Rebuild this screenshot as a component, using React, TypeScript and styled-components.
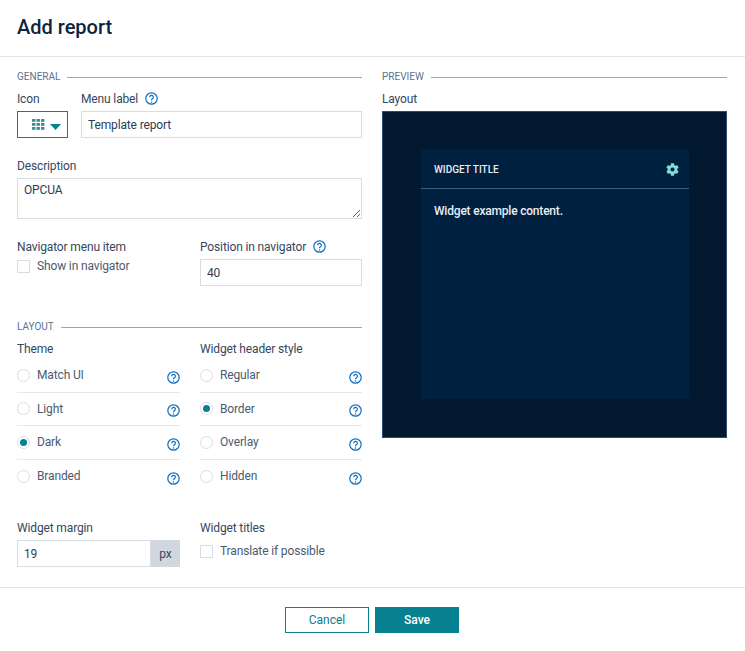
import React from 'react';
import styled, { createGlobalStyle } from 'styled-components';
import { FaCog } from 'react-icons/fa';

const GlobalStyle = createGlobalStyle`
  html, body {
    margin: 0;
    padding: 0;
    background: #fff;
    font-family: Roboto, "Liberation Sans", sans-serif;
    color: #2c3e55;
  }
  * {
    box-sizing: border-box;
  }
`;

const Modal = styled.div`
  width: 745px;
  height: 651px;
  display: flex;
  flex-direction: column;
  background: #fff;
`;

const Header = styled.header`
  height: 57px;
  padding: 15px 17px 0;
  border-bottom: 1px solid #e1e5ea;
`;

const Title = styled.h1`
  margin: 0;
  font-size: 20px;
  line-height: 24px;
  font-weight: 500;
  color: #0e2440;
`;

const Body = styled.div`
  flex: 1;
  display: grid;
  grid-template-columns: 345px 345px;
  column-gap: 20px;
  padding: 14px 18px 0 17px;
`;

const Column = styled.div`
  display: flex;
  flex-direction: column;
`;

const Legend = styled.div<{ $top?: number }>`
  display: flex;
  align-items: center;
  gap: 7px;
  height: 12px;
  margin-top: ${p => p.$top ?? 0}px;
  font-size: 10px;
  line-height: 12px;
  text-transform: uppercase;
  color: #5b7290;

  &::after {
    content: '';
    flex: 1;
    height: 1px;
    margin-top: 1px;
    background: #93a9c0;
  }
`;

const Label = styled.label`
  display: flex;
  align-items: center;
  gap: 7px;
  height: 16px;
  margin-bottom: 4px;
  font-size: 12px;
  line-height: 16px;
  letter-spacing: -0.14px;
  color: #36475e;
`;

const TopRow = styled.div`
  display: flex;
  gap: 13px;
  margin-top: 8px;
`;

const Grow = styled.div`
  flex: 1;
  min-width: 0;
`;

const IconPicker = styled.button`
  display: flex;
  align-items: center;
  width: 51px;
  height: 27px;
  padding: 0;
  background: #fff;
  border: 1px solid #07808f;
`;

const TextInput = styled.input`
  display: block;
  width: 100%;
  min-width: 0;
  height: 27px;
  padding: 0 6px;
  border: 1px solid #d8dde4;
  border-radius: 0;
  outline: none;
  background: #fff;
  font-family: inherit;
  font-size: 12px;
  letter-spacing: -0.14px;
  color: #2c3e55;
`;

const TextArea = styled.textarea`
  display: block;
  width: 100%;
  height: 41px;
  padding: 4px 6px;
  border: 1px solid #d8dde4;
  border-radius: 0;
  outline: none;
  background: #fff;
  font-family: inherit;
  font-size: 12px;
  line-height: 14px;
  letter-spacing: -0.14px;
  color: #2c3e55;
`;

const Field = styled.div<{ $top?: number }>`
  margin-top: ${p => p.$top ?? 0}px;
`;

const TwoCols = styled.div<{ $top?: number }>`
  display: grid;
  grid-template-columns: 163px 162px;
  column-gap: 20px;
  margin-top: ${p => p.$top ?? 0}px;
`;

const CheckRow = styled.div<{ $top: number }>`
  display: flex;
  align-items: center;
  gap: 7px;
  height: 14px;
  margin-top: ${p => p.$top}px;
  font-size: 12px;
  line-height: 14px;
  letter-spacing: -0.14px;
  color: #4a5b72;
`;

const CheckBox = styled.span`
  width: 13px;
  height: 13px;
  border: 1px solid #d8dde4;
  background: #fff;
`;

const RadioList = styled.div`
  margin-top: -2px;
`;

const RadioRow = styled.div`
  display: flex;
  align-items: center;
  height: 33.5px;
  border-bottom: 1px solid #e4e8ed;
  font-size: 12px;
  letter-spacing: -0.14px;
  color: #4a5b72;

  &:last-child {
    border-bottom: none;
  }
`;

const Radio = styled.span<{ $on?: boolean }>`
  display: flex;
  align-items: center;
  justify-content: center;
  width: 13px;
  height: 13px;
  margin-right: 7px;
  border: 1px solid #d8dde4;
  border-radius: 50%;
  background: #fff;

  &::after {
    content: '';
    display: ${p => (p.$on ? 'block' : 'none')};
    width: 7px;
    height: 7px;
    border-radius: 50%;
    background: #07808f;
  }
`;

const RadioText = styled.span`
  flex: 1;
`;

const Help = styled.svg`
  display: block;
  width: 13px;
  height: 13px;
  flex: none;
  margin-top: -2px;
`;

const HelpLow = styled(Help)`
  margin-top: 4px;
`;

const InputGroup = styled.div`
  display: flex;
  height: 27px;
`;

const Addon = styled.span`
  display: flex;
  flex: none;
  align-items: center;
  justify-content: center;
  width: 29px;
  background: #d0d7df;
  font-size: 12px;
  color: #36475e;
`;

const Preview = styled.div`
  height: 327px;
  padding: 37px 37px 38px 38px;
  background: #02182f;
  border: 1px solid #2c4c6e;
  display: flex;
`;

const Widget = styled.div`
  flex: 1;
  background: #00203f;
  color: #e8edf2;
`;

const WidgetHead = styled.div`
  display: flex;
  align-items: center;
  justify-content: space-between;
  height: 40px;
  padding: 2px 10px 0 13px;
  border-bottom: 1px solid #3b5f86;
  font-size: 10px;
  font-weight: 500;
  text-transform: uppercase;
`;

const WidgetBody = styled.div`
  padding: 15px 13px;
  font-size: 12px;
  line-height: 14px;
  font-weight: 500;
  letter-spacing: -0.2px;
`;

const Footer = styled.footer`
  height: 64px;
  display: flex;
  align-items: flex-start;
  justify-content: center;
  gap: 6px;
  padding: 19px 2px 0 0;
  border-top: 1px solid #e1e5ea;
`;

const Button = styled.button<{ $primary?: boolean }>`
  width: 84px;
  height: 26px;
  padding: 0 0 0 1px;
  border: 1px solid #07808f;
  border-radius: 0;
  background: ${p => (p.$primary ? '#07808f' : '#fff')};
  color: ${p => (p.$primary ? '#fff' : '#07808f')};
  font-family: inherit;
  font-size: 12px;
  font-weight: ${p => (p.$primary ? 500 : 400)};
`;

const HelpPaths = () => (
  <>
    <circle cx="6.5" cy="6.5" r="5.7" fill="none" stroke="#0b6fc4" strokeWidth="1.2" />
    <path d="M4.7 5.2a1.85 1.85 0 1 1 2.7 1.6c-.6.35-.9.7-.9 1.4" fill="none" stroke="#0b6fc4" strokeWidth="1.2" />
    <circle cx="6.5" cy="9.9" r=".75" fill="#0b6fc4" />
  </>
);

const HelpIcon = () => (
  <Help viewBox="0 0 13 13">
    <HelpPaths />
  </Help>
);

const RadioHelpIcon = () => (
  <HelpLow viewBox="0 0 13 13">
    <HelpPaths />
  </HelpLow>
);

const PickerGlyph = styled.svg`
  margin-left: 14px;
`;

const Caret = styled.svg`
  margin-left: 5px;
  margin-top: 5px;
`;

const GridIcon = () => (
  <PickerGlyph width="13" height="11" viewBox="0 0 13 11">
    {[0, 4, 8].map(y =>
      [0, 4.5, 9].map(x => <rect key={`${x}-${y}`} x={x} y={y} width="3.4" height="2.8" fill="#3a8c96" />)
    )}
  </PickerGlyph>
);

const CaretIcon = () => (
  <Caret width="11" height="6" viewBox="0 0 11 6">
    <path d="M0 0h11L5.5 6z" fill="#07808f" />
  </Caret>
);

const themes = [
  { name: 'Match UI' },
  { name: 'Light' },
  { name: 'Dark', on: true },
  { name: 'Branded' },
];

const headerStyles = [
  { name: 'Regular' },
  { name: 'Border', on: true },
  { name: 'Overlay' },
  { name: 'Hidden' },
];

function RadioOptions({ items }: { items: { name: string; on?: boolean }[] }) {
  return (
    <RadioList>
      {items.map(item => (
        <RadioRow key={item.name}>
          <Radio $on={item.on} />
          <RadioText>{item.name}</RadioText>
          <RadioHelpIcon />
        </RadioRow>
      ))}
    </RadioList>
  );
}

export default function App() {
  return (
    <>
      <GlobalStyle />
      <Modal>
        <Header>
          <Title>Add report</Title>
        </Header>
        <Body>
          <Column>
            <Legend>General</Legend>
            <TopRow>
              <div>
                <Label>Icon</Label>
                <IconPicker>
                  <GridIcon />
                  <CaretIcon />
                </IconPicker>
              </div>
              <Grow>
                <Label>
                  Menu label <HelpIcon />
                </Label>
                <TextInput readOnly value="Template report" />
              </Grow>
            </TopRow>
            <Field $top={20}>
              <Label>Description</Label>
              <TextArea readOnly value="OPCUA" />
            </Field>
            <TwoCols $top={20}>
              <div>
                <Label>Navigator menu item</Label>
                <CheckRow $top={3}>
                  <CheckBox />
                  Show in navigator
                </CheckRow>
              </div>
              <div>
                <Label>
                  Position in navigator <HelpIcon />
                </Label>
                <TextInput readOnly value="40" />
              </div>
            </TwoCols>
            <Legend $top={35}>Layout</Legend>
            <TwoCols $top={8}>
              <div>
                <Label>Theme</Label>
                <RadioOptions items={themes} />
              </div>
              <div>
                <Label>Widget header style</Label>
                <RadioOptions items={headerStyles} />
              </div>
            </TwoCols>
            <TwoCols $top={27}>
              <div>
                <Label>Widget margin</Label>
                <InputGroup>
                  <TextInput readOnly value="19" />
                  <Addon>px</Addon>
                </InputGroup>
              </div>
              <div>
                <Label>Widget titles</Label>
                <CheckRow $top={8}>
                  <CheckBox />
                  Translate if possible
                </CheckRow>
              </div>
            </TwoCols>
          </Column>
          <Column>
            <Legend>Preview</Legend>
            <TopRow>
              <Grow>
                <Label>Layout</Label>
                <Preview>
                  <Widget>
                    <WidgetHead>
                      Widget title
                      <FaCog size={13} color="#7fdcd6" />
                    </WidgetHead>
                    <WidgetBody>Widget example content.</WidgetBody>
                  </Widget>
                </Preview>
              </Grow>
            </TopRow>
          </Column>
        </Body>
        <Footer>
          <Button>Cancel</Button>
          <Button $primary>Save</Button>
        </Footer>
      </Modal>
    </>
  );
}
